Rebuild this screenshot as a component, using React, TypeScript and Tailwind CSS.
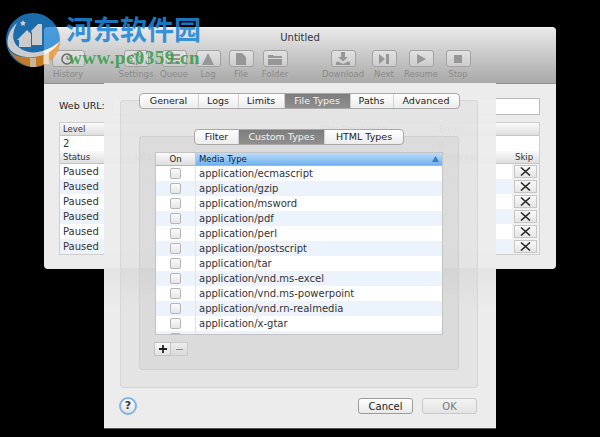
import React from 'react';

const FONT = 'font-["DejaVu_Sans",sans-serif]';

const tools = [
  { label: 'History', gap: 'ml-0', wide: true, icon: 'history' },
  { label: 'Settings', gap: 'ml-[36px]', icon: 'settings' },
  { label: 'Queue', gap: 'ml-[6px]', icon: 'queue' },
  { label: 'Log', gap: 'ml-[2px]', icon: 'log' },
  { label: 'File', gap: 'ml-[1px]', icon: 'file' },
  { label: 'Folder', gap: 'ml-[2px]', icon: 'folder' },
  { label: 'Download', gap: 'ml-[36px]', icon: 'download' },
  { label: 'Next', gap: 'ml-[9px]', icon: 'next' },
  { label: 'Resume', gap: 'ml-[5px]', icon: 'resume' },
  { label: 'Stop', gap: 'ml-[5px]', icon: 'stop' },
];

const ToolIcon = ({ name }: { name: string }) => {
  const c = '#979797';
  return (
    <svg width="16" height="14" viewBox="0 0 16 14" fill={c}>
      {name === 'history' && (
        <g fill="none" stroke="#666" strokeWidth="1.5">
          <circle cx="7" cy="7" r="5" />
          <path d="M7 4v3h3" strokeWidth="1" />
        </g>
      )}
      {name === 'settings' && <circle cx="8" cy="7" r="5" fill="none" stroke={c} strokeWidth="2.5" strokeDasharray="2 1" />}
      {name === 'queue' && <path d="M2 2h12v2H2zM2 6h12v2H2zM2 10h12v2H2z" />}
      {name === 'log' && <path d="M8 1l6 12H2z" />}
      {name === 'file' && <path d="M3 1h6l4 4v8H3z" />}
      {name === 'folder' && <path d="M1 3h5l1 1h8v2H1zM1 7h14v6H1z" />}
      {name === 'download' && <path d="M6 0h4v5h3L8 9.500 3 5h3zM1 10l2-.5L8 12l5-2.500 2 .5v3H1z" />}
      {name === 'next' && <path d="M3 2l6 5-6 5zM10 2h3v10h-3z" />}
      {name === 'resume' && <path d="M4 2l9 5-9 5z" />}
      {name === 'stop' && <path d="M4 3h8v8H4z" />}
    </svg>
  );
};

const Toolbar = () => (
  <div className="h-[56px] shrink-0 border-b border-[#8f8f8f] bg-gradient-to-b from-[#e9e9e9] to-[#a9a9a9] rounded-t-[4px]">
    <div className="h-[18px] flex items-center justify-center text-[10px] text-[#333]">Untitled</div>
    <div className="flex pl-[8px] pt-[4px]">
      {tools.map((t) => (
        <div key={t.label} className={`w-[32px] flex flex-col items-center ${t.gap}`}>
          <div
            className={`${t.wide ? 'w-[33px]' : 'w-[25px]'} h-[17px] shrink-0 flex items-center justify-center rounded-[3px] border border-[#a2a2a2] bg-gradient-to-b from-[#e2e2e2] to-[#cdcdcd]`}
          >
            <ToolIcon name={t.icon} />
          </div>
          <div className="mt-[1px] text-[8.5px] leading-[12px] whitespace-nowrap text-[#8a8a8a]">{t.label}</div>
        </div>
      ))}
    </div>
  </div>
);

const HeaderCell = ({ children }: { children: React.ReactNode }) => (
  <div className="h-[13px] pl-[3px] flex items-center text-[8.5px] text-[#333] bg-gradient-to-b from-[#fafafa] to-[#dedede] border-b border-[#c4c4c4]">
    {children}
  </div>
);

const MainWindow = () => (
  <div className={`absolute left-[44px] top-[27px] w-[512px] h-[242px] flex flex-col rounded-[4px] bg-[#ececec] border-t border-[#f4f4f4] ${FONT}`}>
    <Toolbar />
    <div className="flex-1 pl-[15px] pr-[16px]">
      <div className="flex items-center mt-[14px] h-[17px]">
        <div className="w-[53px] text-[9.500px] text-[#222] whitespace-nowrap">Web URL:</div>
        <div className="flex-1 h-[17px] bg-white border border-[#bbb]" />
      </div>
      <div className="mt-[7px] border border-[#cfcfcf] bg-white">
        <HeaderCell>
          <span>Level</span>
          <span className="ml-[235px]">Files Remaining</span>
          <span className="ml-[52px]">Errors</span>
        </HeaderCell>
        <div className="h-[15px] pl-[3px] flex items-center text-[10px] text-[#333]">
          <span>2</span>
          <span className="ml-[368px] text-[#555]">0</span>
        </div>
        <div className="flex h-[13px]">
          <div className="flex-1">
            <HeaderCell>
              <span>Status</span>
              <span className="ml-[45px]">URL</span>
              <span className="ml-[290px]">Progress</span>
            </HeaderCell>
          </div>
          <div className="w-[27px]">
            <HeaderCell>Skip</HeaderCell>
          </div>
        </div>
        {[0, 1, 2, 3, 4, 5].map((i) => (
          <div key={i} className={`flex h-[15px] items-center ${i % 2 ? 'bg-[#edf3fc]' : 'bg-white'}`}>
            <div className="flex-1 pl-[3px] text-[10px] text-[#333]">Paused</div>
            <div className="w-[27px] h-[15px] bg-[#f1f1f1] flex items-center justify-center">
              <div className="w-[23px] h-[13px] flex items-center justify-center bg-gradient-to-b from-[#fafafa] to-[#e4e4e4] border border-[#c6c6c6]">
                <svg width="11" height="9" viewBox="0 0 11 9" stroke="#222" strokeWidth="1.500">
                  <path d="M1 .500l9 8M10 .500l-9 8" />
                </svg>
              </div>
            </div>
          </div>
        ))}
      </div>
    </div>
  </div>
);

const Segments = ({ items, active }: { items: { label: string; w: string }[]; active: string }) => (
  <div className="flex rounded-[4px] border border-[#a8a8a8] bg-gradient-to-b from-white to-[#ececec] overflow-hidden">
    {items.map((s, i) => (
      <div
        key={s.label}
        className={`${s.w} flex items-center justify-center whitespace-nowrap ${
          s.label === active
            ? 'bg-gradient-to-b from-[#7d7d7d] to-[#8f8f8f] text-[#f2f2f2]'
            : 'text-[#222]'
        } ${i > 0 ? 'border-l border-[#d2d2d2]' : ''}`}
      >
        {s.label}
      </div>
    ))}
  </div>
);

const mediaTypes = [
  'application/ecmascript',
  'application/gzip',
  'application/msword',
  'application/pdf',
  'application/perl',
  'application/postscript',
  'application/tar',
  'application/vnd.ms-excel',
  'application/vnd.ms-powerpoint',
  'application/vnd.rn-realmedia',
  'application/x-gtar',
  'application/x-tar',
];

const MediaTable = () => (
  <div className="mx-[15px] mt-[7px] h-[183px] overflow-hidden border border-[#c4c4c4] bg-white">
    <div className="flex h-[13px] text-[8.5px] text-[#222] border-b border-[#9fb9d8]">
      <div className="w-[40px] flex items-center justify-center bg-gradient-to-b from-[#fafafa] to-[#dedede] border-r border-[#c4c4c4]">On</div>
      <div className="flex-1 flex items-center justify-between px-[3px] bg-gradient-to-b from-[#bcdcf8] to-[#6fb2ee] text-[#10233a]">
        <span>Media Type</span>
        <svg width="7" height="6" viewBox="0 0 7 6" fill="#3b7cc0">
          <path d="M3.500 0L7 6H0z" />
        </svg>
      </div>
    </div>
    {mediaTypes.map((m, i) => (
      <div key={m} className={`flex h-[15px] shrink-0 items-center ${i % 2 ? 'bg-[#edf3fc]' : 'bg-white'}`}>
        <div className="w-[40px] h-full flex items-center justify-center border-r border-[#e4e4e4]">
          <div className="w-[11px] h-[11px] rounded-[2px] border border-[#b5b5b5] bg-gradient-to-b from-[#fafafa] to-[#e6e6e6]" />
        </div>
        <div className="pl-[3px] text-[10px] leading-[15px] text-[#333] whitespace-nowrap">{m}</div>
      </div>
    ))}
  </div>
);

const Sheet = () => (
  <div
    className={`absolute left-[104px] top-[83px] w-[392px] h-[346px] flex flex-col border-b border-[#555] bg-[linear-gradient(to_bottom,rgba(236,236,236,0.96)_0,rgba(236,236,236,0.96)_185px,rgb(228,228,228)_185px,rgb(236,236,236)_225px)] ${FONT}`}
  >
    <div className="ml-[16px] mr-[18px] mt-[17px] h-[288px] rounded-[3px] border border-[#d6d6d6] bg-black/[0.03] flex flex-col">
      <div className="-mt-[8px] flex justify-center">
        <div className="h-[16px] text-[9.500px] flex">
          <Segments
            active="File Types"
            items={[
              { label: 'General', w: 'w-[58px]' },
              { label: 'Logs', w: 'w-[40px]' },
              { label: 'Limits', w: 'w-[46px]' },
              { label: 'File Types', w: 'w-[66px]' },
              { label: 'Paths', w: 'w-[43px]' },
              { label: 'Advanced', w: 'w-[66px]' },
            ]}
          />
        </div>
      </div>
      <div className="mx-[18px] mt-[27px] h-[234px] rounded-[3px] border border-[#cfcfcf] bg-black/[0.035] flex flex-col">
        <div className="-mt-[8px] flex justify-center">
          <div className="h-[16px] text-[9.500px] flex">
            <Segments
              active="Custom Types"
              items={[
                { label: 'Filter', w: 'w-[43px]' },
                { label: 'Custom Types', w: 'w-[86px]' },
                { label: 'HTML Types', w: 'w-[79px]' },
              ]}
            />
          </div>
        </div>
        <MediaTable />
        <div className="ml-[14px] mt-[7px] flex h-[14px] w-[34px] text-[#333]">
          <div className="w-[17px] flex items-center justify-center bg-gradient-to-b from-[#f8f8f8] to-[#e2e2e2] border border-[#c2c2c2]">
            <svg width="8" height="8" viewBox="0 0 9 9" fill="#222">
              <path d="M3.500 0h2v3.500H9v2H5.500V9h-2V5.500H0v-2h3.500z" />
            </svg>
          </div>
          <div className="w-[17px] flex items-center justify-center bg-gradient-to-b from-[#ececec] to-[#dadada] border border-l-0 border-[#cacaca]">
            <div className="w-[7px] h-[1px] bg-[#888]" />
          </div>
        </div>
      </div>
    </div>
    <div className="ml-[15px] mr-[19px] mt-[9px] flex items-center">
      <div className="w-[18px] h-[18px] rounded-full border-2 border-[#7fb4e6] bg-gradient-to-b from-white to-[#e2e2e2] flex items-center justify-center text-[11px] font-bold text-[#333]">
        ?
      </div>
      <div className="ml-auto w-[55px] h-[16px] rounded-[3px] border border-[#9c9c9c] bg-gradient-to-b from-white to-[#e8e8e8] flex items-center justify-center text-[10px] text-[#222]">
        Cancel
      </div>
      <div className="ml-[9px] w-[55px] h-[16px] rounded-[3px] border border-[#c9c9c9] bg-gradient-to-b from-[#f2f2f2] to-[#e4e4e4] flex items-center justify-center text-[10px] text-[#777]">
        OK
      </div>
    </div>
  </div>
);

// site watermark that sits on top of the whole shot
const Watermark = () => (
  <div className="absolute left-0 top-0 w-[210px] h-[75px] pointer-events-none">
    <svg className="absolute left-[5px] top-[12px] opacity-80" width="58" height="56" viewBox="5 12 58 56">
      <circle cx="33" cy="40" r="27" fill="#2388d8" />
      <path d="M7 47C12 58 24 67 33 67c14 0 25-10 27-24C52 49 36 57 24 57 16 57 10 53 7 47z" fill="#f59a2e" />
      <path d="M8 46c-2-9 3-18 9-23-3 6-5 12-3 18 3 8 14 13 24 11 9-2 17-6 22-11-4 8-14 15-26 16C22 58 11 54 8 46z" fill="#fff" />
      <path d="M17 40l10-10 4 4v13H19v-7z" fill="#fff" />
      <path d="M31 31l7-7h4v21H32V33z" fill="#fff" />
      <path d="M23 20l1 2 2 .5-1.500 1.500.5 2-2-1-2 1 .5-2L20 22.500l2-.5z" fill="#fff" />
      <path d="M30 58h6v9h-6zM43 52h6v12h-6z" fill="#fff" opacity="0.7" />
    </svg>
    <div className='absolute left-[66px] top-[10px] text-[27px] leading-[38px] font-bold whitespace-nowrap text-[#1f86d8]/90 font-["Noto_Sans_CJK_SC",sans-serif]'>
      河东软件园
    </div>
    <div className='absolute left-[68px] top-[47px] text-[19px] leading-[21px] font-bold whitespace-nowrap tracking-[0.5px] text-[#36a04a]/90 font-["Liberation_Serif",serif]'>
      www.pc0359.cn
    </div>
  </div>
);

export default function App() {
  return (
    <div className="relative w-[600px] h-[437px] overflow-hidden bg-black">
      <MainWindow />
      <Sheet />
      <Watermark />
    </div>
  );
}
